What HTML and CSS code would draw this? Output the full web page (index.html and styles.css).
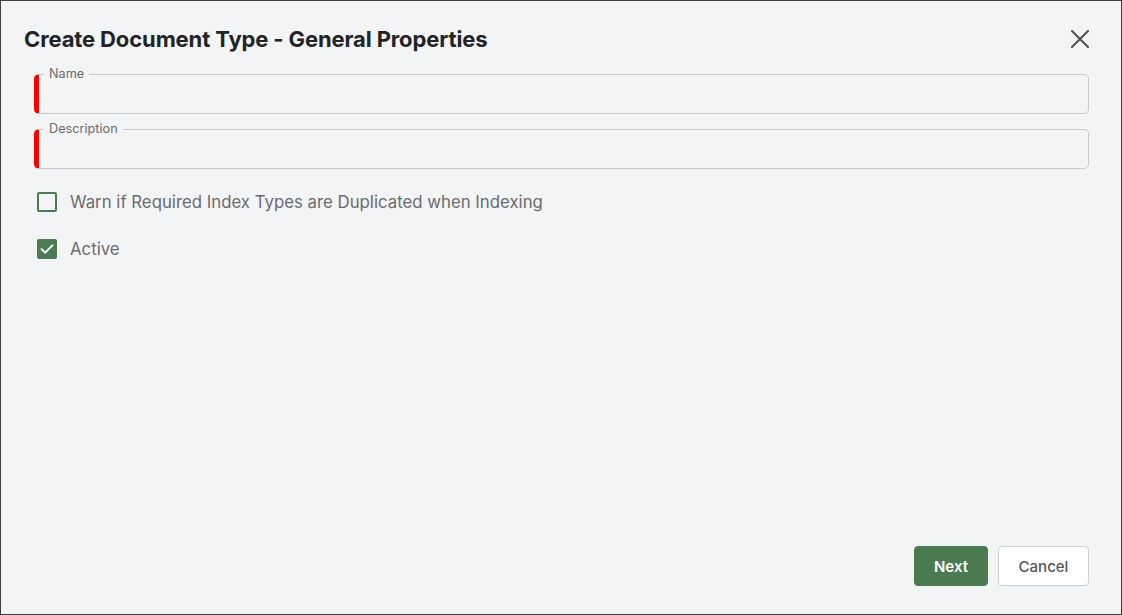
FILE: index.html
```html
<!DOCTYPE html>
<html>
<head>
<meta charset="utf-8">
<link rel="stylesheet" href="styles.css">
</head>
<body>
<div class="dialog">
  <div class="header">
    <h1 class="title">Create Document Type - General Properties</h1>
    <button class="close" aria-label="Close">
      <svg width="18" height="18" viewBox="0 0 18 18"><path d="M1 1 L17 17 M17 1 L1 17" stroke="#555" stroke-width="2.2" stroke-linecap="round"/></svg>
    </button>
  </div>
  <div class="body">
    <fieldset class="field">
      <legend class="label">Name</legend>
      <input class="input" type="text">
    </fieldset>
    <fieldset class="field">
      <legend class="label">Description</legend>
      <input class="input" type="text">
    </fieldset>
    <label class="check">
      <span class="box"></span>
      <span class="check-text">Warn if Required Index Types are Duplicated when Indexing</span>
    </label>
    <label class="check">
      <span class="box checked">
        <svg width="16" height="16" viewBox="0 0 16 16"><path d="M2.6 8.2 L6.2 11.6 L13.4 4.4" fill="none" stroke="#fff" stroke-width="2" stroke-linecap="round" stroke-linejoin="round"/></svg>
      </span>
      <span class="check-text">Active</span>
    </label>
  </div>
  <div class="footer">
    <button class="btn primary">Next</button>
    <button class="btn secondary">Cancel</button>
  </div>
</div>
</body>
</html>
```
FILE: styles.css
```css
* { box-sizing: border-box; }
html, body { margin: 0; padding: 0; }
body {
  font-family: Inter, "Noto Sans", sans-serif;
  background: #f3f4f6;
}
.dialog {
  width: 1122px;
  height: 615px;
  border: 1px solid #3f3f3f;
  background: #f3f4f6;
  display: flex;
  flex-direction: column;
}
.header {
  display: flex;
  align-items: center;
  justify-content: space-between;
  padding: 26px 32px 0 23px;
  height: 50px;
}
.title {
  margin: 0;
  font-size: 22px;
  line-height: 24px;
  font-weight: 700;
  color: #222326;
  letter-spacing: -0.12px;
}
.close {
  border: 0;
  background: none;
  padding: 0;
  width: 18px;
  height: 18px;
  display: flex;
}
.body {
  flex: 1;
  padding: 16px 32px 0 33px;
  display: flex;
  flex-direction: column;
}
.field {
  margin: 0 0 8px 0;
  padding: 0 5px;
  border: 1px solid #c9c9cc;
  border-left: 5px solid #ff0000;
  border-radius: 5px;
  height: 47px;
  min-width: 0;
}
.label {
  font-size: 12.7px;
  line-height: 14px;
  color: #6b6b70;
  padding: 0 5px;
  margin-left: 0;
}
.input {
  border: 0;
  background: transparent;
  width: 100%;
  height: 24px;
  outline: none;
  font-family: inherit;
  font-size: 15px;
}
.check {
  display: flex;
  align-items: center;
  gap: 13px;
  margin-left: 3px;
  height: 20px;
}
.check:first-of-type { margin-top: 15px; }
.check + .check { margin-top: 27px; }
.box {
  width: 20px;
  height: 20px;
  border: 2px solid #4d7b53;
  border-radius: 2px;
  display: flex;
  align-items: center;
  justify-content: center;
  background: transparent;
}
.box.checked { background: #4d7b53; }
.check-text {
  font-size: 16.8px;
  color: #6b6b6e;
  line-height: 20px;
}
.footer {
  display: flex;
  justify-content: flex-end;
  gap: 10px;
  padding: 0 32px 28px 0;
}
.btn {
  height: 40px;
  border-radius: 4px;
  font-family: inherit;
  font-size: 15px;
  padding: 0;
}
.primary {
  width: 74px;
  background: #4a7a50;
  border: 1px solid #4a7a50;
  color: #fff;
  font-weight: 600;
}
.secondary {
  width: 91px;
  background: #fff;
  border: 1px solid #cfcfd2;
  color: #55565a;
  font-weight: 500;
}
```
